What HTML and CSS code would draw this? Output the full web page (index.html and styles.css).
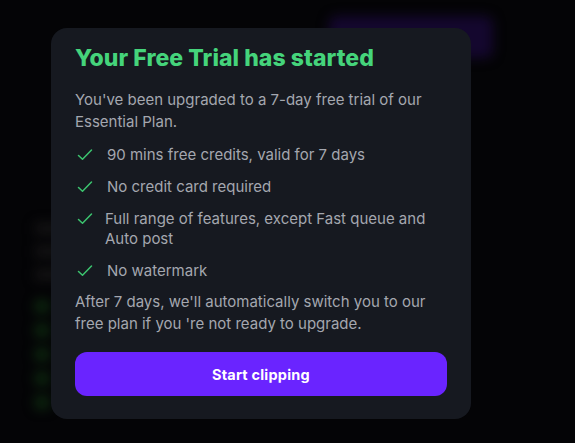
FILE: index.html
```html
<!DOCTYPE html>
<html lang="en">
<head>
    <meta charset="UTF-8">
    <meta name="viewport" content="width=device-width, initial-scale=1.0">
    <title>Free trial</title>
    <link rel="stylesheet" href="styles.css">
</head>
<body>
    <!-- page behind the dialog, dimmed and blurred -->
    <div class="page">
        <div class="page-top">
            <div class="page-btn"></div>
        </div>
        <div class="page-list">
            <span class="bar"></span>
            <span class="bar"></span>
            <span class="bar"></span>
            <span class="dot"></span>
            <span class="dot"></span>
            <span class="dot"></span>
            <span class="dot"></span>
            <span class="dot"></span>
        </div>
    </div>

    <div class="overlay">
        <div class="modal">
            <h2 class="modal-title">Your Free Trial has started</h2>
            <p class="modal-text">You've been upgraded to a 7-day free trial of our Essential Plan.</p>
            <ul class="perks">
                <li>
                    <svg class="check" viewBox="0 0 18 18"><path d="M3.5 9.5 L7.5 13.3 L16.5 4"/></svg>
                    <span>90 mins free credits, valid for 7 days</span>
                </li>
                <li>
                    <svg class="check" viewBox="0 0 18 18"><path d="M3.5 9.5 L7.5 13.3 L16.5 4"/></svg>
                    <span>No credit card required</span>
                </li>
                <li class="wide">
                    <svg class="check" viewBox="0 0 18 18"><path d="M3.5 9.5 L7.5 13.3 L16.5 4"/></svg>
                    <span>Full range of features, except Fast queue and Auto post</span>
                </li>
                <li>
                    <svg class="check" viewBox="0 0 18 18"><path d="M3.5 9.5 L7.5 13.3 L16.5 4"/></svg>
                    <span>No watermark</span>
                </li>
            </ul>
            <p class="modal-text after">After 7 days, we'll automatically switch you to our free plan if you 're not ready to upgrade.</p>
            <button class="start-btn">Start clipping</button>
        </div>
    </div>
</body>
</html>
```

FILE: styles.css
```css
body {
    margin: 0;
    padding: 0;
    height: 100vh;
    overflow: hidden;
    background-color: #040406;
    font-family: "Inter", "Open Sans", sans-serif;
}

/* fundo */
.page {
    height: 100%;
    filter: blur(6px);
}

.page-top {
    display: flex;
    justify-content: flex-end;
    padding: 16px 82px 0 0;
}

.page-btn {
    width: 164px;
    height: 42px;
    border-radius: 8px;
    background-color: #14072e;
}

.page-list {
    display: flex;
    flex-direction: column;
    gap: 12px;
    padding: 165px 0 0 35px;
}

.bar {
    width: 40px;
    height: 11px;
    background-color: #141314;
}

.dot {
    width: 14px;
    height: 13px;
    border-radius: 4px;
    background-color: #0d2a0f;
}

.page-list .dot {
    margin-bottom: -1px;
}

.page-list .dot:nth-child(4) {
    margin-top: 8px;
}

/* dialog */
.overlay {
    position: fixed;
    top: 0;
    left: 0;
    right: 0;
    bottom: 0;
    padding: 28px 0 0 51px;
}

.modal {
    width: 420px;
    box-sizing: border-box;
    padding: 14px 24px 23px;
    background-color: #161920;
    border-radius: 16px;
}

.modal-title {
    margin: 0;
    font-size: 23px;
    line-height: 32px;
    font-weight: 800;
    letter-spacing: 0.05px;
    color: #45d47b;
}

.modal-text {
    margin: 15px 0 0;
    font-size: 15px;
    line-height: 22px;
    color: #a4a7af;
}

.perks {
    list-style: none;
    margin: 12px 0 0;
    padding: 0;
    display: flex;
    flex-direction: column;
    gap: 12px;
}

.perks li {
    display: flex;
    align-items: flex-start;
    gap: 14px;
    font-size: 15px;
    line-height: 20px;
    color: #a4a7af;
}

.perks li.wide {
    gap: 12px;
}

.check {
    width: 18px;
    height: 18px;
    flex-shrink: 0;
    margin-top: 1px;
    fill: none;
    stroke: #3cc46f;
    stroke-width: 1.5;
    stroke-linecap: round;
    stroke-linejoin: round;
}

.modal-text.after {
    margin-top: 10px;
}

.start-btn {
    display: block;
    width: 100%;
    height: 44px;
    margin-top: 17px;
    border: none;
    border-radius: 12px;
    background-color: #6a24ff;
    color: #ffffff;
    font-family: inherit;
    font-size: 14.5px;
    font-weight: 700;
    letter-spacing: 0.2px;
}
```
